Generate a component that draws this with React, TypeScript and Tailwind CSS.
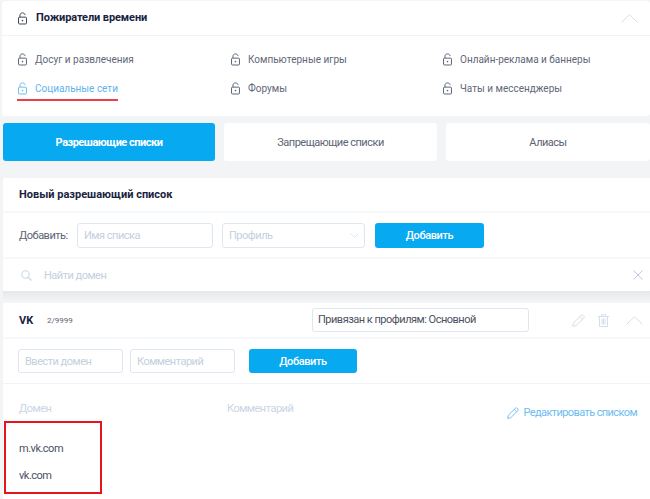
const Lock = ({ className = "text-[#5b6478]" }: { className?: string }) => (
  <svg width="9" height="13" viewBox="0 0 10 14" fill="none" stroke="currentColor" strokeWidth="1.1" className={className}>
    <path d="M2.200 5.500V3.200C2.200 1.800 3.400.8 5 .8s2.800 1 2.800 2.400" />
    <rect x=".6" y="5.500" width="8.800" height="7.600" rx="1" />
    <circle cx="5" cy="9.300" r=".9" fill="currentColor" stroke="none" />
  </svg>
);
const Chevron = ({ w = 17, h = 9, c = "#d4dfec" }: { w?: number; h?: number; c?: string }) => (
  <svg width={w} height={h} viewBox="0 0 17 9" fill="none" stroke={c} strokeWidth="1"><path d="M.5 8.500 8.500.7l8 7.800" /></svg>
);
const ChevronDown = () => (
  <svg width="9" height="5" viewBox="0 0 9 5" fill="none" stroke="#dde6f1" strokeWidth="1"><path d="m.5.5 4 4 4-4" /></svg>
);
const Pencil = ({ c, s = 13 }: { c: string; s?: number }) => (
  <svg width={s} height={s} viewBox="0 0 13 13" fill="none" stroke={c} strokeWidth="1"><path d="M.7 12.300 1.400 9 9.200 1.200c.5-.5 1.200-.5 1.700 0l1 1c.5.5.5 1.200 0 1.700L4 11.600zM8 2.500l2.600 2.600" /></svg>
);
const Item = ({ label, active }: { label: string; active?: boolean }) => (
  <div className="flex items-center gap-[8px]">
    <Lock className={active ? "text-[#6fbcf0]" : "text-[#5b6478]"} />
    <span className={`text-[10px] ${active ? "text-[#5db4ee]" : "text-[#5f6779]"}`}>{label}</span>
  </div>
);
const Field = ({ text, w, cls = "" }: { text: string; w: string; cls?: string }) => (
  <div className={`${w} ${cls} h-[25px] border border-[#dde6f1] rounded-[3px] flex items-center pl-[6px] pt-[2px] text-[11px] tracking-[-0.5px] text-[#c3d0e0]`}>{text}</div>
);

export default function App() {
  return (
    <div className="w-[650px] h-[499px] overflow-hidden bg-[#f3f4f6] text-[#3c4354]" style={{ fontFamily: 'Roboto, "Noto Sans", sans-serif' }}>
      <section className="relative ml-[2px] mt-px h-[115px] bg-white rounded-[3px]">
        <header className="h-[35px] border-b border-[#f1f3f6] flex items-center pl-[16px] pr-[12px] justify-between">
          <div className="flex items-center gap-[9px]">
            <Lock className="text-[#3c4354]" />
            <span className="pt-[1px] text-[11px] font-bold tracking-[-0.1px] text-[#17233f]">Пожиратели времени</span>
          </div>
          <Chevron />
        </header>
        <div className="grid grid-cols-[213px_212px_1fr] grid-rows-[29px_29px] pl-[16px] pt-[9px]">
          <Item label="Досуг и развлечения" />
          <Item label="Компьютерные игры" />
          <Item label="Онлайн-реклама и баннеры" />
          <Item label="Социальные сети" active />
          <Item label="Форумы" />
          <Item label="Чаты и мессенджеры" />
        </div>
        <div className="absolute left-[15px] top-[98px] w-[101px] h-[2px] bg-[#ee3f48]" />
      </section>

      <nav className="flex mt-[7px] ml-[3px] gap-[9px] h-[38px] text-[11px] tracking-[-0.5px]">
        <div className="w-[212px] pt-[2px] bg-[#07a9f0] rounded-[3px] flex items-center justify-center text-white font-bold">Разрешающие списки</div>
        <div className="w-[213px] pt-[2px] bg-white rounded-[3px] flex items-center justify-center text-[#5c6474]">Запрещающие списки</div>
        <div className="flex-1 pt-[2px] bg-white rounded-[3px] flex items-center justify-center text-[#5c6474]">Алиасы</div>
      </nav>

      <main className="relative mt-[17px] ml-[3px] h-[321px] bg-white">
        <h2 className="h-[35px] border-b-2 border-[#f7f8f9] flex items-center pl-[16px] pt-[2px] text-[11px] font-bold text-[#17233f]">Новый разрешающий список</h2>
        <div className="h-[46px] border-b-2 border-[#f7f8f9] flex items-center pl-[16px] text-[11px]">
          <span className="w-[58px] pt-[2px] tracking-[-0.5px] text-[#5c6474]">Добавить:</span>
          <Field text="Имя списка" w="w-[136px]" />
          <Field text="Профиль" w="w-[143px]" cls="ml-[9px]" />
          <div className="-ml-[15px] mr-[16px] flex"><ChevronDown /></div>
          <button className="w-[109px] h-[25px] pt-[2px] bg-[#07a9f0] rounded-[3px] text-white text-[11px] tracking-[-0.4px] font-medium">Добавить</button>
        </div>
        <div className="h-[32px] flex items-center pl-[18px] pr-[7px] text-[11px] tracking-[-0.5px] text-[#c3d0e0]">
          <svg width="11" height="11" viewBox="0 0 11 11" fill="none" stroke="#c9d6e5" strokeWidth="1.100"><circle cx="4.500" cy="4.500" r="3.700" /><path d="m7.300 7.300 3.200 3.200" /></svg>
          <span className="ml-[12px] pt-[2px] flex-1">Найти домен</span>
          <svg width="10" height="10" viewBox="0 0 10 10" stroke="#bccbdc" strokeWidth="1"><path d="m.5.5 9 9M9.500.5l-9 9" /></svg>
        </div>
        <div className="h-[12px] bg-gradient-to-b from-[#e6e8eb] to-[#f5f6f7]" />
        <div className="h-[36px] border-b-2 border-[#f7f8f9] flex items-center pl-[16px]">
          <span className="w-[28px] pt-[2px] text-[11px] font-bold text-[#17233f]">VK</span>
          <span className="w-[265px] pt-[2px] text-[8px] text-[#5c6474]">2/9999</span>
          <div className="w-[217px] h-[24px] border border-[#dde6f1] rounded-[3px] flex items-center pl-[5px] text-[11px] tracking-[-0.5px] text-[#4b5262]">Привязан к профилям: Основной</div>
          <span className="ml-[43px]"><Pencil c="#d3deea" /></span>
          <svg className="ml-[13px]" width="11" height="13" viewBox="0 0 11 13" fill="none" stroke="#d3deea" strokeWidth="1"><path d="M0 2.500h11M3.500 2.500V.7h4v1.800M1.500 2.500v10h8v-10M4 4.500v6M5.500 4.500v6M7 4.500v6" /></svg>
          <span className="ml-[17px]"><Chevron /></span>
        </div>
        <div className="h-[45px] border-b border-[#f1f3f6] flex items-center pl-[15px] gap-[7px]">
          <Field text="Ввести домен" w="w-[105px]" cls="!h-[24px]" />
          <Field text="Комментарий" w="w-[105px]" cls="!h-[24px]" />
          <button className="ml-[7px] w-[108px] h-[24px] pt-[2px] bg-[#07a9f0] rounded-[3px] text-white text-[11px] tracking-[-0.4px] font-medium">Добавить</button>
        </div>
        <div className="flex pl-[16px] pt-[17px] text-[11px] tracking-[-0.5px] text-[#c9d6e5]">
          <span className="w-[208px]">Домен</span>
          <span className="flex-1">Комментарий</span>
          <span className="flex items-center gap-[5px] pr-[13px] pt-[4px] tracking-[-0.6px] text-[#6cbcf2]"><Pencil c="#6cbcf2" s={12} />Редактировать списком</span>
        </div>
        <div className="pl-[16px] pt-[13px] text-[11px] tracking-[-0.5px] text-[#4b5262] leading-[27px]">
          <div>m.vk.com</div>
          <div>vk.com</div>
        </div>
        <div className="absolute left-[1px] top-[243px] w-[98px] h-[73px] border-2 border-[#e8141c]" />
      </main>
    </div>
  );
}
